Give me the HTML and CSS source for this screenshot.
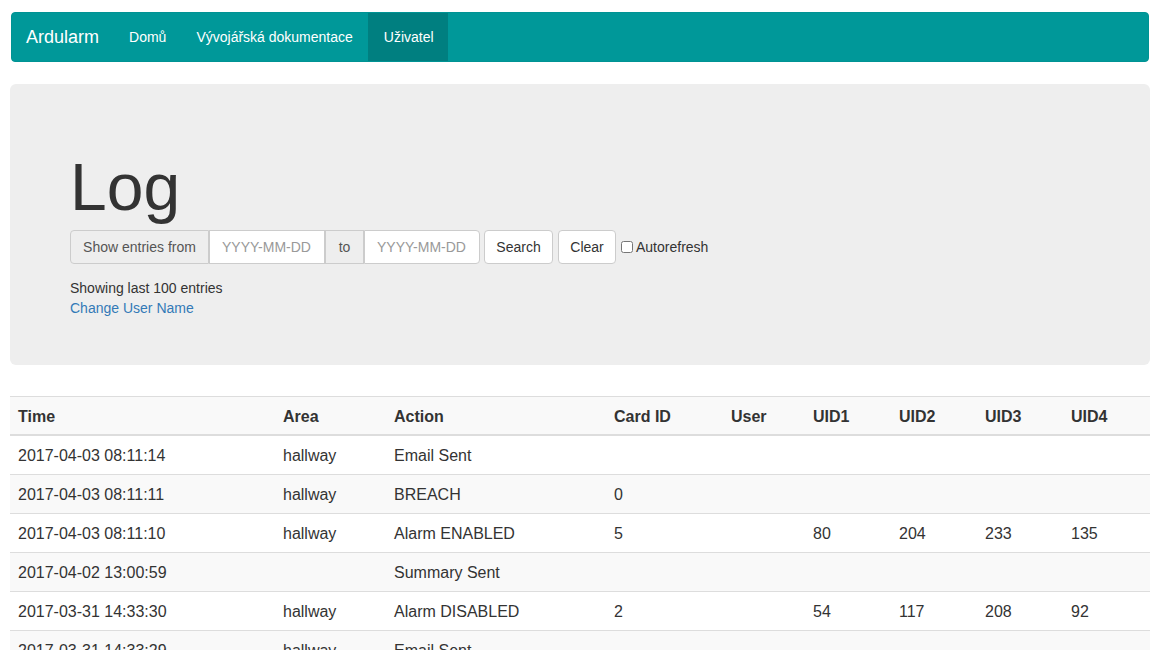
FILE: index.html
```html
<!DOCTYPE html>
<html lang="cs">
<head>
<meta charset="utf-8">
<title>Ardularm - Log</title>
<link rel="stylesheet" href="styles.css">
</head>
<body>
<div class="page">
  <nav class="navbar">
    <a class="brand" href="#">Ardularm</a>
    <ul class="nav">
      <li><a href="#">Domů</a></li>
      <li><a href="#">Vývojářská dokumentace</a></li>
      <li class="active"><a href="#">Uživatel</a></li>
    </ul>
  </nav>

  <section class="jumbotron">
    <h1>Log</h1>
    <form class="filter">
      <div class="input-group">
        <span class="addon addon-from">Show entries from</span>
        <input class="field" type="text" placeholder="YYYY-MM-DD">
        <span class="addon addon-to">to</span>
        <input class="field" type="text" placeholder="YYYY-MM-DD">
      </div>
      <button class="btn btn-search" type="button">Search</button>
      <button class="btn btn-clear" type="button">Clear</button>
      <label class="check"><input type="checkbox"> Autorefresh</label>
    </form>
    <div class="info">
      <div>Showing last 100 entries</div>
      <a href="#">Change User Name</a>
    </div>
  </section>

  <table class="log">
    <colgroup>
      <col class="c-time"><col class="c-area"><col class="c-action"><col class="c-card"><col class="c-user"><col class="c-uid"><col class="c-uid"><col class="c-uid"><col class="c-uid4">
    </colgroup>
    <thead>
      <tr><th>Time</th><th>Area</th><th>Action</th><th>Card ID</th><th>User</th><th>UID1</th><th>UID2</th><th>UID3</th><th>UID4</th></tr>
    </thead>
    <tbody>
      <tr><td>2017-04-03 08:11:14</td><td>hallway</td><td>Email Sent</td><td></td><td></td><td></td><td></td><td></td><td></td></tr>
      <tr><td>2017-04-03 08:11:11</td><td>hallway</td><td>BREACH</td><td>0</td><td></td><td></td><td></td><td></td><td></td></tr>
      <tr><td>2017-04-03 08:11:10</td><td>hallway</td><td>Alarm ENABLED</td><td>5</td><td></td><td>80</td><td>204</td><td>233</td><td>135</td></tr>
      <tr><td>2017-04-02 13:00:59</td><td></td><td>Summary Sent</td><td></td><td></td><td></td><td></td><td></td><td></td></tr>
      <tr><td>2017-03-31 14:33:30</td><td>hallway</td><td>Alarm DISABLED</td><td>2</td><td></td><td>54</td><td>117</td><td>208</td><td>92</td></tr>
      <tr><td>2017-03-31 14:33:29</td><td>hallway</td><td>Email Sent</td><td></td><td></td><td></td><td></td><td></td><td></td></tr>
      <tr><td>2017-03-31 14:33:27</td><td>hallway</td><td>BREACH</td><td>0</td><td></td><td></td><td></td><td></td><td></td></tr>
    </tbody>
  </table>
</div>
</body>
</html>
```

FILE: styles.css
```css
* { box-sizing: border-box; }

html, body {
  margin: 0;
  padding: 0;
  background: #fff;
}

body {
  font-family: "Liberation Sans", Arial, sans-serif;
  font-size: 14px;
  line-height: 20px;
  color: #333;
}

.page {
  padding: 12px 10px 0;
}

/* Navbar */
.navbar {
  display: flex;
  align-items: stretch;
  height: 50px;
  margin: 0 1px 22px;
  background: #009899;
  border: 1px solid #009394;
  border-radius: 4px;
  overflow: hidden;
}

.brand {
  display: flex;
  align-items: center;
  padding: 0 15px 0 14px;
  font-size: 18px;
  color: #fff;
  text-decoration: none;
}

.nav {
  display: flex;
  list-style: none;
  margin: 0;
  padding: 0;
}

.nav li a {
  display: flex;
  align-items: center;
  height: 100%;
  padding: 0 15px;
  color: #fff;
  text-decoration: none;
  font-size: 14px;
}

.nav li.active a {
  padding-left: 16px;
  padding-right: 14px;
  background: #007f80;
}

/* Jumbotron */
.jumbotron {
  background: #eee;
  border-radius: 6px;
  padding: 48px 60px 47px;
  margin-bottom: 31px;
}

.jumbotron h1 {
  margin: 19px 0 6px;
  font-size: 66px;
  line-height: 1.1;
  font-weight: 500;
  color: #333;
}

.filter {
  display: flex;
  align-items: center;
  gap: 4px;
  margin: 0 0 14px;
}

.input-group {
  display: flex;
  height: 34px;
}

.addon {
  display: flex;
  align-items: center;
  justify-content: center;
  padding: 0;
  background: #eee;
  border: 1px solid #ccc;
  color: #555;
  font-size: 14px;
  white-space: nowrap;
}

.addon-from {
  width: 139px;
  border-radius: 4px 0 0 4px;
}

.addon-to {
  width: 39px;
}

.field {
  width: 116px;
  height: 34px;
  padding: 6px 12px;
  border: 1px solid #ccc;
  margin: 0;
  background: #fff;
  font-family: "Liberation Sans", Arial, sans-serif;
  font-size: 14px;
  color: #555;
}

.input-group .field:last-child {
  border-radius: 0 4px 4px 0;
}

.field::placeholder {
  color: #999;
}

.btn {
  height: 34px;
  padding: 6px 0;
  background: #fff;
  border: 1px solid #ccc;
  border-radius: 4px;
  font-family: "Liberation Sans", Arial, sans-serif;
  font-size: 14px;
  line-height: 20px;
  color: #333;
  text-align: center;
}

.btn-search { width: 69px; }
.btn-clear { width: 58px; margin-left: 1px; }

.check {
  display: flex;
  align-items: center;
  margin-left: 1px;
  font-size: 14px;
  color: #333;
}

.check input {
  margin: 1px 3px 0 0;
  width: 12px;
  height: 12px;
}

.info {
  font-size: 14px;
  line-height: 20px;
}

.info a {
  color: #337ab7;
  text-decoration: none;
}

/* Table */
.log {
  width: 100%;
  table-layout: fixed;
  border-collapse: separate;
  border-spacing: 0;
  font-size: 16px;
  line-height: 22px;
  color: #333;
}

.c-time { width: 265px; }
.c-area { width: 111px; }
.c-action { width: 220px; }
.c-card { width: 117px; }
.c-user { width: 82px; }
.c-uid { width: 86px; }
.c-uid4 { width: 87px; }

.log th {
  text-align: left;
  font-weight: bold;
  padding: 9px 8px 6px;
  border-top: 1px solid #ddd;
  border-bottom: 2px solid #ddd;
  background: #f9f9f9;
}

.log td {
  padding: 9px 8px 7px;
  border-top: 1px solid #ddd;
  white-space: nowrap;
}

.log tbody tr:first-child td {
  border-top: 0;
}

.log tbody tr:nth-child(even) td {
  background: #f9f9f9;
}
```
